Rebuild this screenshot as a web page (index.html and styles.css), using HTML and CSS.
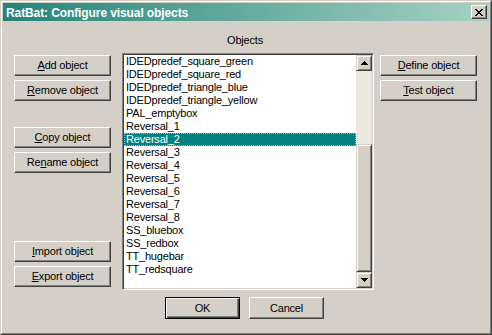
FILE: index.html
```html
<!DOCTYPE html>
<html>
<head>
<meta charset="utf-8">
<title>RatBat: Configure visual objects</title>
<link rel="stylesheet" href="styles.css">
</head>
<body>
<div class="window">
  <div class="frame">
    <div class="titlebar">
      <span class="title">RatBat: Configure visual objects</span>
      <span class="close">
        <svg width="8" height="7" viewBox="0 0 8 7" shape-rendering="crispEdges"><path d="M0 0h2v1h-2z M6 0h2v1h-2z M1 1h2v1h-2z M5 1h2v1h-2z M2 2h4v1h-4z M3 3h2v1h-2z M2 4h4v1h-4z M1 5h2v1h-2z M5 5h2v1h-2z M0 6h2v1h-2z M6 6h2v1h-2z" fill="#000"/></svg>
      </span>
    </div>
    <div class="client">
      <div class="main">
        <div class="col col-left">
          <div class="btn"><span><u>A</u>dd object</span></div>
          <div class="btn"><span><u>R</u>emove object</span></div>
          <div class="btn btn-gap1"><span><u>C</u>opy object</span></div>
          <div class="btn"><span>Re<u>n</u>ame object</span></div>
          <div class="btn btn-gap2"><span><u>I</u>mport object</span></div>
          <div class="btn"><span><u>E</u>xport object</span></div>
        </div>
        <div class="center">
          <div class="label">Objects</div>
          <div class="listbox">
            <ul class="items">
              <li>IDEDpredef_square_green</li>
              <li>IDEDpredef_square_red</li>
              <li>IDEDpredef_triangle_blue</li>
              <li>IDEDpredef_triangle_yellow</li>
              <li>PAL_emptybox</li>
              <li>Reversal_1</li>
              <li class="selected">Reversal_2</li>
              <li>Reversal_3</li>
              <li>Reversal_4</li>
              <li>Reversal_5</li>
              <li>Reversal_6</li>
              <li>Reversal_7</li>
              <li>Reversal_8</li>
              <li>SS_bluebox</li>
              <li>SS_redbox</li>
              <li>TT_hugebar</li>
              <li>TT_redsquare</li>
            </ul>
            <div class="scrollbar">
              <div class="sb-btn">
                <svg width="7" height="4" viewBox="0 0 7 4" shape-rendering="crispEdges"><path d="M3 0h1v1h-1z M2 1h3v1h-3z M1 2h5v1h-5z M0 3h7v1h-7z" fill="#000"/></svg>
              </div>
              <div class="track"></div>
              <div class="thumb"></div>
              <div class="sb-btn">
                <svg width="7" height="4" viewBox="0 0 7 4" shape-rendering="crispEdges"><path d="M0 0h7v1h-7z M1 1h5v1h-5z M2 2h3v1h-3z M3 3h1v1h-1z" fill="#000"/></svg>
              </div>
            </div>
          </div>
        </div>
        <div class="col col-right">
          <div class="btn"><span><u>D</u>efine object</span></div>
          <div class="btn"><span><u>T</u>est object</span></div>
        </div>
      </div>
      <div class="actions">
        <div class="btn btn-default btn-action"><span>OK</span></div>
        <div class="btn btn-action"><span>Cancel</span></div>
      </div>
    </div>
  </div>
</div>
</body>
</html>
```

FILE: styles.css
```css
* { box-sizing: border-box; }

html, body {
  margin: 0;
  padding: 0;
  background: #d4d0c8;
}

body {
  font-family: "Liberation Sans", Arial, sans-serif;
  font-size: 11px;
  color: #000;
  letter-spacing: -0.2px;
}

.window {
  width: 492px;
  height: 335px;
  border: 1px solid;
  border-color: #d4d0c8 #404040 #404040 #d4d0c8;
  background: #d4d0c8;
}

.frame {
  height: 100%;
  border: 1px solid;
  border-color: #fff #808080 #808080 #fff;
  padding: 1px;
  display: flex;
  flex-direction: column;
}

.titlebar {
  height: 18px;
  flex: none;
  display: flex;
  align-items: center;
  justify-content: space-between;
  padding: 0 2px 0 3px;
  background: linear-gradient(to right, #23847a, #a7d2c4);
}

.title {
  color: #fff;
  font-weight: bold;
  font-size: 12px;
  line-height: 14px;
  letter-spacing: -0.1px;
  padding-top: 1px;
  white-space: nowrap;
}

.close {
  width: 16px;
  height: 14px;
  display: flex;
  align-items: center;
  justify-content: center;
  background: #d4d0c8;
  border: 1px solid;
  border-color: #fff #404040 #404040 #fff;
  box-shadow: inset -1px -1px #808080;
}

.close svg { display: block; margin-left: -1px; }

.client {
  flex: 1;
  margin-top: 1px;
  padding-top: 12px;
  display: flex;
  flex-direction: column;
}

.main {
  display: flex;
  align-items: flex-start;
}

.col {
  width: 97px;
  padding-top: 21px;
  display: flex;
  flex-direction: column;
  gap: 4px;
}

.col-left { margin-left: 11px; }
.col-right { margin-left: 6px; }

.btn {
  height: 21px;
  display: flex;
  align-items: center;
  justify-content: center;
  line-height: 13px;
  white-space: nowrap;
  background: #d4d0c8;
  border: 1px solid;
  border-color: #fff #404040 #404040 #fff;
  box-shadow: inset -1px -1px #808080, inset 1px 1px #d4d0c8;
}

.btn u { text-underline-offset: 1px; }

.btn-gap1 { margin-top: 22px; }
.btn-gap2 { margin-top: 64px; }

.center {
  width: 252px;
  margin-left: 11px;
  display: flex;
  flex-direction: column;
}

.label {
  height: 13px;
  line-height: 13px;
  text-align: center;
  margin-bottom: 6px;
  padding-right: 6px;
}

.listbox {
  height: 237px;
  display: flex;
  background: #fff;
  border: 1px solid;
  border-color: #808080 #fff #fff #808080;
  box-shadow: inset 1px 1px #404040, inset -1px -1px #d4d0c8;
  padding: 1px;
}

.items {
  flex: 1;
  list-style: none;
  margin: 0;
  padding: 0;
  overflow: hidden;
}

.items li {
  height: 13px;
  line-height: 13px;
  padding-left: 2px;
  white-space: nowrap;
}

.items li.selected {
  background: #008080;
  color: #fff;
  outline: 1px dotted #8cc8c2;
  outline-offset: -1px;
}

.scrollbar {
  width: 16px;
  flex: none;
  display: flex;
  flex-direction: column;
}

.sb-btn, .thumb {
  background: #d4d0c8;
  border: 1px solid;
  border-color: #d4d0c8 #404040 #404040 #d4d0c8;
  box-shadow: inset 1px 1px #fff, inset -1px -1px #808080;
}

.sb-btn {
  height: 16px;
  flex: none;
  display: flex;
  align-items: center;
  justify-content: center;
}

.sb-btn svg { display: block; }

.track {
  flex: 1;
  background: #ebe8e2;
}

.thumb {
  height: 128px;
  flex: none;
}

.actions {
  margin-top: 7px;
  display: flex;
  justify-content: center;
  gap: 9px;
  padding-right: 3px;
}

.btn-action {
  width: 75px;
  height: 22px;
}

.btn-default {
  border-color: #000;
  box-shadow: inset 1px 1px #fff, inset -1px -1px #404040, inset -2px -2px #808080;
}
```
